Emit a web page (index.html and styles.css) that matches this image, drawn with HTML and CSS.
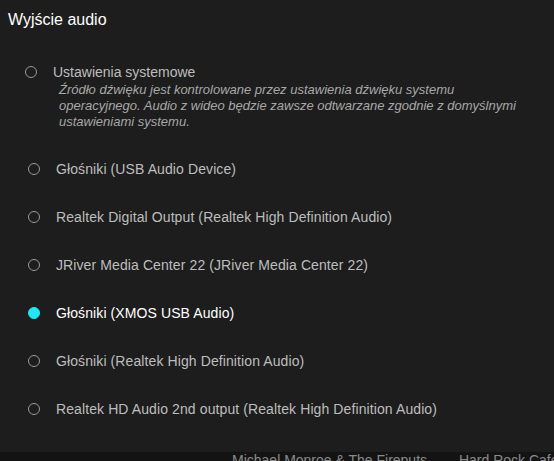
FILE: index.html
```html
<!DOCTYPE html>
<html lang="pl">
<head>
    <meta charset="UTF-8">
    <title>Wyjście audio</title>
    <link rel="stylesheet" href="styles.css">
</head>
<body>

    <div class="panel">
        <!-- Header -->
        <div class="title">Wyjście audio</div>

        <!-- System option -->
        <div class="option system">
            <span class="radio"></span>
            <div class="option-body">
                <div class="label">Ustawienia systemowe</div>
                <div class="desc">Źródło dźwięku jest kontrolowane przez ustawienia dźwięku systemu operacyjnego. Audio z wideo będzie zawsze odtwarzane zgodnie z domyślnymi ustawieniami systemu.</div>
            </div>
        </div>

        <!-- Devices -->
        <div class="devices">
            <div class="option"><span class="radio"></span><span class="label">Głośniki (USB Audio Device)</span></div>
            <div class="option"><span class="radio"></span><span class="label">Realtek Digital Output (Realtek High Definition Audio)</span></div>
            <div class="option"><span class="radio"></span><span class="label">JRiver Media Center 22 (JRiver Media Center 22)</span></div>
            <div class="option selected"><span class="radio"></span><span class="label">Głośniki (XMOS USB Audio)</span></div>
            <div class="option"><span class="radio"></span><span class="label">Głośniki (Realtek High Definition Audio)</span></div>
            <div class="option"><span class="radio"></span><span class="label">Realtek HD Audio 2nd output (Realtek High Definition Audio)</span></div>
        </div>
    </div>

    <div class="now-playing">
        <span class="artist">Michael Monroe &amp; The Fireputs</span>
        <span class="album">Hard Rock Cafe</span>
    </div>

</body>
</html>
```

FILE: styles.css
```css
html, body {
    margin: 0;
    height: 461px;
    overflow: hidden;
}

body {
    font-family: "Liberation Sans", Arial, sans-serif;
    background-color: #1d1d1d;
    color: #bdbdbd;
    display: flex;
    flex-direction: column;
}

.panel {
    height: 452px;
    flex-shrink: 0;
    padding: 10px 8px 0;
    box-sizing: border-box;
}

.title {
    font-size: 16px;
    line-height: 20px;
    color: #fff;
}

.option {
    display: flex;
    align-items: center;
    height: 48px;
    padding-left: 20px;
    font-size: 14px;
    letter-spacing: 0.1px;
}

.option.system {
    align-items: flex-start;
    height: auto;
    margin-top: 34px;
    padding-left: 17px;
    letter-spacing: 0;
}

.option.system .radio {
    margin-top: 2px;
}

.option-body {
    margin-left: 16px;
}

.label {
    line-height: 16px;
}

.desc {
    margin: 2px 0 0 6px;
    font-size: 13px;
    line-height: 16px;
    font-style: italic;
    color: #a8a8a8;
    width: 460px;
}

.devices {
    margin-top: 15px;
}

.radio {
    width: 10px;
    height: 10px;
    border: 1px solid #9a9a9a;
    border-radius: 50%;
    flex-shrink: 0;
}

.devices .radio {
    margin-right: 16px;
}

.option.selected .radio {
    border-color: #22e6f2;
    background-color: #22e6f2;
}

.option.selected .label {
    color: #fff;
}

.now-playing {
    flex: 1;
    background-color: #131313;
    color: #8a8a8a;
    font-size: 14px;
    line-height: 16px;
    padding-left: 232px;
    white-space: nowrap;
}

.now-playing .album {
    margin-left: 28px;
}
```
